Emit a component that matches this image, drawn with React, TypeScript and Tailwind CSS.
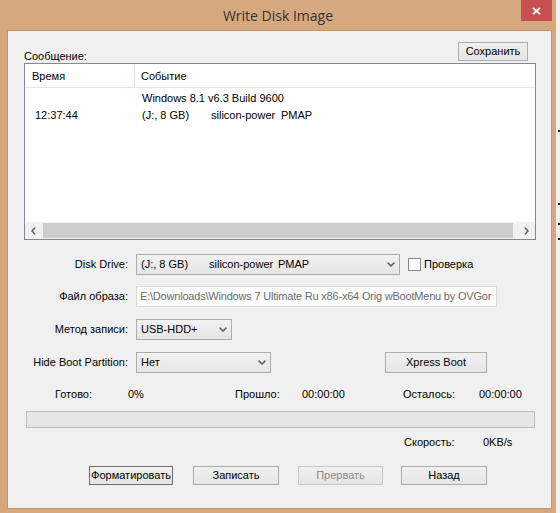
import React from "react";

// Win8-style "Write Disk Image" dialog (UltraISO)

const ui = "font-['Liberation_Sans',Arial,sans-serif] text-[11px] leading-[13px] text-black";

function Chevron() {
  return (
    <svg width="8" height="5" viewBox="0 0 8 5" className="shrink-0">
      <path d="M0.6 0.6 L4 4 L7.4 0.6" fill="none" stroke="#5f5f5f" strokeWidth="1.5" />
    </svg>
  );
}

function Combo({ className, children }: { className: string; children: React.ReactNode }) {
  return (
    <div
      className={`flex h-[21px] items-center border border-[#acacac] bg-gradient-to-b from-[#f2f2f2] to-[#e5e5e5] pl-[4px] pr-[4px] ${className}`}
    >
      <div className="flex min-w-0 flex-1 items-center overflow-hidden whitespace-nowrap">{children}</div>
      <Chevron />
    </div>
  );
}

function Button({
  className,
  children,
  disabled = false,
  focused = false,
}: {
  className: string;
  children: React.ReactNode;
  disabled?: boolean;
  focused?: boolean;
}) {
  return (
    <div
      className={`flex shrink-0 items-center justify-center overflow-hidden whitespace-nowrap border bg-gradient-to-b from-[#f0f0f0] to-[#e5e5e5] ${
        focused ? "border-[#707070]" : disabled ? "border-[#c8c8c8] text-[#8a8a8a]" : "border-[#acacac]"
      } ${className}`}
    >
      {children}
    </div>
  );
}

function FormRow({ label, children, className }: { label: string; children: React.ReactNode; className: string }) {
  return (
    <div className={`flex h-[21px] shrink-0 items-center ${className}`}>
      <div className="w-[104px] shrink-0 text-right whitespace-nowrap">{label}</div>
      <div className="ml-[8px] flex items-center">{children}</div>
    </div>
  );
}

export default function App() {
  return (
    <div className={`flex h-[513px] w-[560px] overflow-hidden ${ui}`}>
      {/* window */}
      <div className="flex h-[513px] w-[556px] shrink-0 flex-col bg-[#d6a87d] pb-[4px] pl-[7px] pr-[4px]">
        {/* title bar */}
        <div className="grid h-[30px] shrink-0 grid-cols-[28px_1fr_31px] items-start">
          <div />
          <div className="flex h-[30px] items-center justify-center font-['Open_Sans','Noto_Sans',sans-serif] text-[14px] text-[#333333]">
            Write Disk Image
          </div>
          <div className="flex h-[21px] w-[31px] items-center justify-center bg-[#c75050]">
            <svg width="9" height="8" viewBox="0 0 9 8">
              <path d="M1 0.8 L8 7.2 M8 0.8 L1 7.2" stroke="#ffffff" strokeWidth="1.8" />
            </svg>
          </div>
        </div>

        {/* client area */}
        <div className="flex flex-1 flex-col items-start border border-[#c09570] bg-[#f0f0f0] pl-[16px] pr-[16px]">
          {/* message header */}
          <div className="mt-[11px] flex h-[19px] w-[504px] shrink-0 items-start justify-between">
            <div className="pt-[8px]">Сообщение:</div>
            <Button className="h-[19px] w-[70px]">Сохранить</Button>
          </div>

          {/* log list */}
          <div className="mt-[2px] flex h-[177px] w-[512px] shrink-0 flex-col border border-[#828790] bg-white">
            <div className="flex h-[24px] shrink-0 border-b border-[#e5e5e5]">
              <div className="flex w-[110px] items-center border-r border-[#e5e5e5] pl-[7px] pt-[2px]">Время</div>
              <div className="flex items-center pl-[6px] pt-[2px]">Событие</div>
            </div>
            <div className="flex flex-1 pt-[2px] leading-[17px]">
              <div className="w-[111px] pl-[10px] pt-[17px]">12:37:44</div>
              <div className="pl-[6px]">
                <div className="whitespace-nowrap">Windows 8.1 v6.3 Build 9600</div>
                <div className="flex whitespace-nowrap">
                  <span className="w-[69px]">(J:, 8 GB)</span>
                  <span className="w-[70px]">silicon-power</span>
                  <span>PMAP</span>
                </div>
              </div>
            </div>
            {/* horizontal scrollbar */}
            <div className="flex h-[17px] shrink-0 items-center bg-[#f0f0f0]">
              <div className="flex h-[17px] w-[17px] items-center justify-center">
                <svg width="5" height="8" viewBox="0 0 5 8">
                  <path d="M4.2 0.6 L1 4 L4.2 7.4" fill="none" stroke="#606060" strokeWidth="1.5" />
                </svg>
              </div>
              <div className="ml-[1px] h-[15px] w-[470px] bg-[#cdcdcd]" />
              <div className="flex-1" />
              <div className="flex h-[17px] w-[17px] items-center justify-center">
                <svg width="5" height="8" viewBox="0 0 5 8">
                  <path d="M0.8 0.6 L4 4 L0.8 7.4" fill="none" stroke="#606060" strokeWidth="1.5" />
                </svg>
              </div>
            </div>
          </div>

          {/* form */}
          <FormRow label="Disk Drive:" className="mt-[14px]">
            <Combo className="w-[264px]">
              <span className="inline-block w-[68px]">(J:, 8 GB)</span>
              <span className="inline-block w-[69px]">silicon-power</span>
              <span>PMAP</span>
            </Combo>
            <div className="ml-[8px] h-[13px] w-[13px] border border-[#8a8a8a] bg-white" />
            <div className="ml-[3px]">Проверка</div>
          </FormRow>

          <FormRow label="Файл образа:" className="mt-[11px]">
            <div className="flex h-[21px] w-[361px] items-center overflow-hidden whitespace-nowrap border border-[#d9d9d9] bg-[#fcfcfc] pl-[3px] tracking-[-0.2px] text-[#6d6d6d]">
              E:\Downloads\Windows 7 Ultimate Ru x86-x64 Orig wBootMenu by OVGor
            </div>
          </FormRow>

          <FormRow label="Метод записи:" className="mt-[12px]">
            <Combo className="w-[96px]">USB-HDD+</Combo>
          </FormRow>

          <FormRow label="Hide Boot Partition:" className="mt-[12px]">
            <Combo className="w-[135px]">Нет</Combo>
            <Button className="ml-[114px] h-[21px] w-[102px]">Xpress Boot</Button>
          </FormRow>

          {/* progress info */}
          <div className="mt-[15px] flex h-[13px] shrink-0 whitespace-nowrap pl-[31px]">
            <span className="w-[73px]">Готово:</span>
            <span className="w-[107px]">0%</span>
            <span className="w-[67px]">Прошло:</span>
            <span className="w-[101px]">00:00:00</span>
            <span className="w-[76px]">Осталось:</span>
            <span>00:00:00</span>
          </div>

          <div className="ml-[2px] mt-[10px] h-[17px] shrink-0 self-stretch border border-[#bcbcbc] bg-[#e6e6e6]" />

          <div className="mt-[8px] flex h-[13px] shrink-0 whitespace-nowrap pl-[380px]">
            <span className="w-[79px]">Скорость:</span>
            <span>0KB/s</span>
          </div>

          {/* action buttons */}
          <div className="mt-[17px] flex h-[19px] shrink-0 pl-[65px]">
            <Button className="h-[19px] w-[84px]" focused>
              Форматировать
            </Button>
            <Button className="ml-[20px] h-[19px] w-[86px]">Записать</Button>
            <Button className="ml-[19px] h-[19px] w-[85px]" disabled>
              Прервать
            </Button>
            <Button className="ml-[18px] h-[19px] w-[86px]">Назад</Button>
          </div>
        </div>
      </div>

      {/* sliver of the desktop behind */}
      <div className="flex w-[4px] shrink-0 flex-col bg-[#f0f0f0] pl-[2px]">
        <div className="mt-[130px] h-[2px] w-[2px] bg-[#202020]" />
        <div className="mt-[71px] h-[2px] w-[2px] bg-[#202020]" />
        <div className="mt-[18px] h-[2px] w-[2px] bg-[#202020]" />
        <div className="mt-[13px] h-[2px] w-[2px] bg-[#202020]" />
      </div>
    </div>
  );
}
